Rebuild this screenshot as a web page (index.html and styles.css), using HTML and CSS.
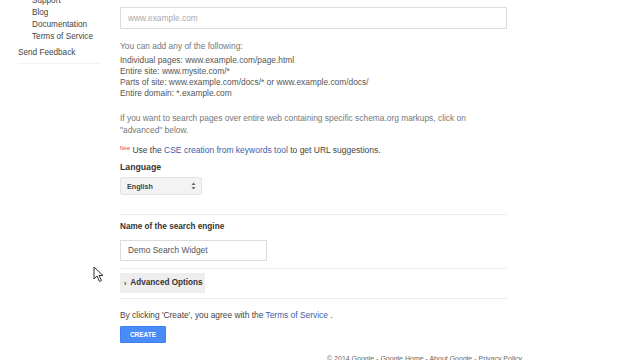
FILE: index.html
```html
<!DOCTYPE html>
<html lang="en">
  <head>
    <meta charset="UTF-8" />
    <title>Custom Search - New search engine</title>
    <link rel="stylesheet" href="styles.css">
  </head>
  <body>
    <div class="page">
      <!-- Left navigation -->
      <div class="sidebar">
        <ul class="nav-sub">
          <li><a href="#">Support</a></li>
          <li><a href="#">Blog</a></li>
          <li><a href="#">Documentation</a></li>
          <li><a href="#">Terms of Service</a></li>
        </ul>
        <a class="feedback" href="#">Send Feedback</a>
      </div>

      <!-- Main form -->
      <div class="main">
        <div class="url-input">www.example.com</div>

        <p class="help">You can add any of the following:</p>
        <ul class="examples">
          <li>Individual pages: www.example.com/page.html</li>
          <li>Entire site: www.mysite.com/*</li>
          <li>Parts of site: www.example.com/docs/* or www.example.com/docs/</li>
          <li>Entire domain: *.example.com</li>
        </ul>

        <p class="help schema">If you want to search pages over entire web containing specific schema.org markups, click on "advanced" below.</p>

        <p class="suggest"><span class="new">New</span> Use the <a href="#">CSE creation from keywords tool</a> to get URL suggestions.</p>

        <div class="label lang-label">Language</div>
        <div class="select">
          <span>English</span>
          <svg width="5" height="8" viewBox="0 0 5 8">
            <path d="M0.5 3 L2.5 0.5 L4.5 3 Z M0.5 5 L2.5 7.5 L4.5 5 Z" fill="#666" />
          </svg>
        </div>

        <div class="rule rule-first"></div>

        <div class="label name-label">Name of the search engine</div>
        <div class="name-input">Demo Search Widget</div>

        <div class="rule rule-name"></div>

        <div class="advanced"><span class="caret">&#8250;</span> Advanced Options</div>

        <div class="rule rule-adv"></div>

        <p class="terms">By clicking 'Create', you agree with the <a href="#">Terms of Service</a> .</p>
        <button class="create">CREATE</button>
      </div>
    </div>

    <div class="footer">&copy; 2014 Google - Google Home - About Google - Privacy Policy</div>

    <svg class="cursor" width="11" height="17" viewBox="0 0 11 17">
      <path d="M1 1 L1 13 L4 10 L6.5 15.5 L8.5 14.5 L6 9.5 L10 9.5 Z" fill="#fff" stroke="#333" stroke-width="1" stroke-linejoin="round" />
    </svg>
  </body>
</html>
```

FILE: styles.css
```css
* {
  margin: 0;
  padding: 0;
  box-sizing: border-box;
}

body {
  font-family: "Liberation Sans", Arial, sans-serif;
  font-size: 8.4px;
  color: #555;
  background: #fff;
  overflow: hidden;
  height: 360px;
}

a {
  text-decoration: none;
}

.page {
  display: flex;
}

.sidebar {
  width: 120px;
  padding-left: 18px;
  margin-top: -5px;
  font-size: 8.2px;
}

.nav-sub {
  list-style: none;
  padding-left: 14px;
  line-height: 12px;
}

.nav-sub a,
.feedback {
  color: #444;
}

.feedback {
  display: block;
  margin-top: 4px;
  width: 82px;
  line-height: 12px;
  padding-bottom: 4px;
  border-bottom: 1px solid #f2f2f2;
}

.main {
  width: 387px;
  padding-top: 7px;
}

.url-input {
  height: 22px;
  border: 1px solid #dcdcdc;
  padding-left: 7px;
  line-height: 20px;
  color: #aaa;
}

.help {
  margin-top: 12px;
  line-height: 11px;
  color: #777;
}

.examples {
  list-style: none;
  margin-top: 3px;
  line-height: 11px;
  color: #555;
}

.schema {
  margin-top: 13px;
  line-height: 12px;
  padding-right: 10px;
}

.suggest {
  margin-top: 7px;
  line-height: 11px;
  color: #444;
  font-size: 8.5px;
}

.suggest a,
.terms a {
  color: #3b5ea9;
}

.new {
  color: #e33;
  font-size: 5px;
  vertical-align: 3px;
}

.label {
  font-weight: bold;
  color: #333;
  line-height: 12px;
}

.lang-label {
  font-size: 8.7px;
  margin-top: 5px;
}

.select {
  margin-top: 4px;
  width: 82px;
  height: 18px;
  display: flex;
  align-items: center;
  justify-content: space-between;
  padding: 0 5px 0 6px;
  background: #f3f3f3;
  border: 1px solid #e3e3e3;
  border-radius: 2px;
  font-size: 7.2px;
  font-weight: bold;
  color: #444;
}

.rule {
  height: 1px;
  background: #ececec;
}

.rule-first {
  margin-top: 19px;
}

.name-label {
  margin-top: 6px;
  font-size: 8.2px;
}

.name-input {
  margin-top: 7px;
  width: 147px;
  height: 21px;
  border: 1px solid #dcdcdc;
  padding-left: 7px;
  line-height: 19px;
  color: #555;
}

.rule-name {
  margin-top: 7px;
}

.advanced {
  margin-top: 4px;
  width: 85px;
  height: 20px;
  background: #eee;
  line-height: 20px;
  padding-left: 4px;
  font-size: 8.2px;
  font-weight: bold;
  color: #333;
  white-space: nowrap;
}

.caret {
  display: inline-block;
  font-size: 7px;
  margin-right: 2px;
  vertical-align: -1px;
}

.rule-adv {
  margin-top: 5px;
}

.terms {
  margin-top: 11px;
  line-height: 11px;
  color: #444;
}

.create {
  display: block;
  margin-top: 5px;
  width: 46px;
  height: 17px;
  background: #4a8cf7;
  border: 1px solid #3d7ff0;
  border-radius: 1px;
  color: #fff;
  font-family: "Liberation Sans", Arial, sans-serif;
  font-size: 6.5px;
  font-weight: bold;
}

.footer {
  margin-top: 12px;
  padding-left: 327px;
  font-size: 7px;
  color: #666;
  white-space: nowrap;
}

.cursor {
  position: absolute;
  left: 93px;
  top: 266px;
}
```
